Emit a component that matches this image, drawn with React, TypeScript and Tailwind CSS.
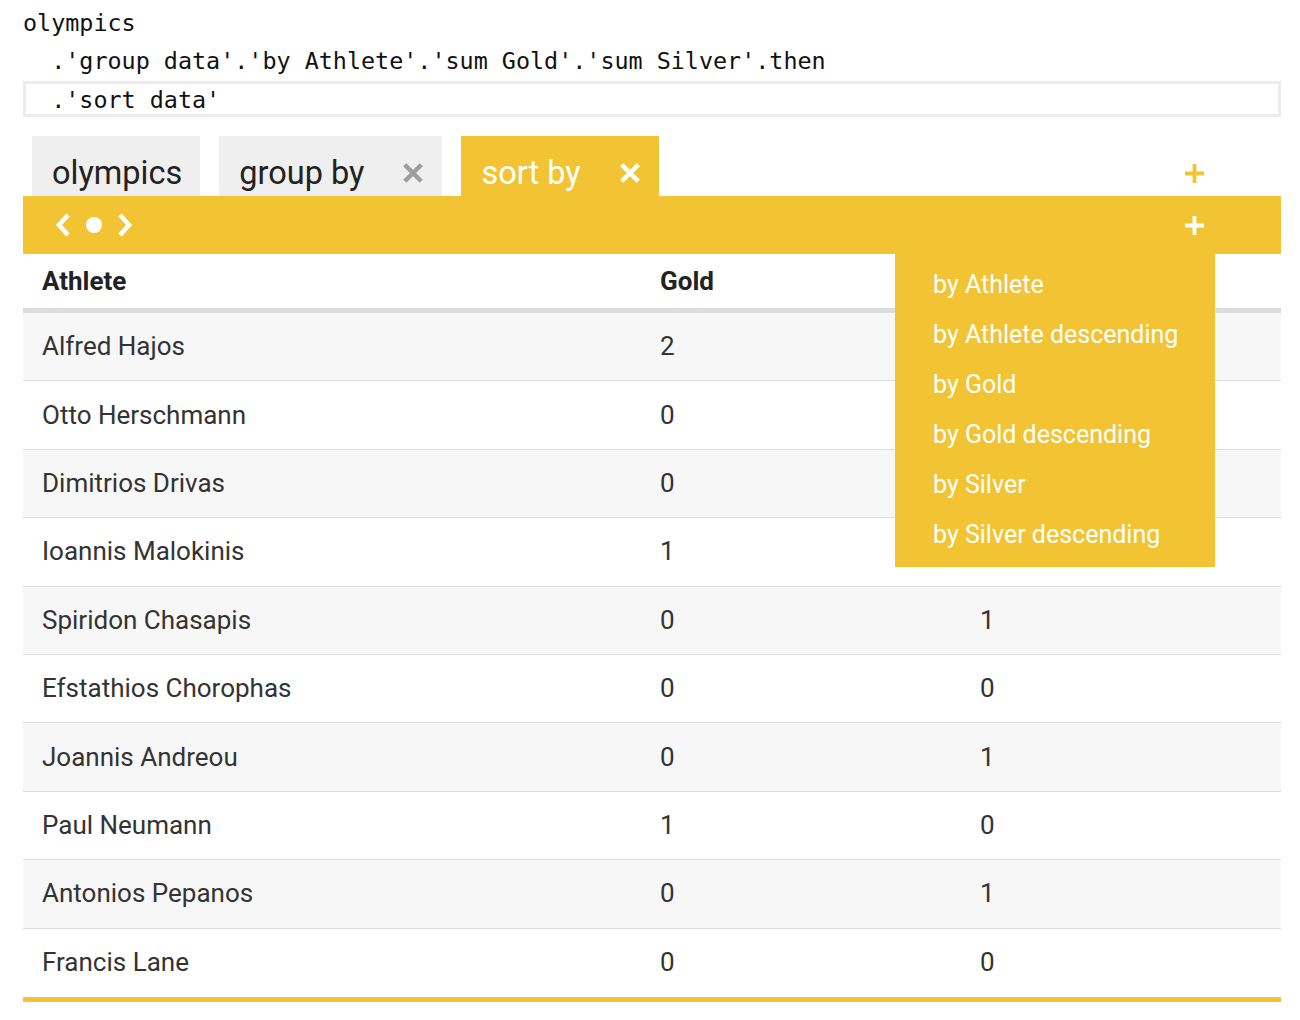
const rows = [
  { athlete: "Alfred Hajos", gold: 2, silver: 0 },
  { athlete: "Otto Herschmann", gold: 0, silver: 1 },
  { athlete: "Dimitrios Drivas", gold: 0, silver: 0 },
  { athlete: "Ioannis Malokinis", gold: 1, silver: 0 },
  { athlete: "Spiridon Chasapis", gold: 0, silver: 1 },
  { athlete: "Efstathios Chorophas", gold: 0, silver: 0 },
  { athlete: "Joannis Andreou", gold: 0, silver: 1 },
  { athlete: "Paul Neumann", gold: 1, silver: 0 },
  { athlete: "Antonios Pepanos", gold: 0, silver: 1 },
  { athlete: "Francis Lane", gold: 0, silver: 0 },
];

const sortOptions = [
  "by Athlete",
  "by Athlete descending",
  "by Gold",
  "by Gold descending",
  "by Silver",
  "by Silver descending",
];

const Cross = ({ className }: { className?: string }) => (
  <svg viewBox="0 0 24 24" className={className} fill="none" stroke="currentColor" strokeWidth={5}>
    <path d="M3 3 L21 21 M21 3 L3 21" />
  </svg>
);

const Plus = ({ className }: { className?: string }) => (
  <svg viewBox="0 0 22 22" className={className} fill="none" stroke="currentColor" strokeWidth={4}>
    <path d="M11 1 V21 M1 11 H21" />
  </svg>
);

function Tab({ label, active, closable }: { label: string; active?: boolean; closable?: boolean }) {
  return (
    <div
      className={
        active
          ? "flex items-center h-full bg-[#f2c433] text-white pl-[20px] pr-[18px] pt-[14px]"
          : "flex items-center h-full bg-[#efefef] text-[#222] pl-[20px] pr-[18px] pt-[14px]"
      }
    >
      <span className="text-[32.5px] leading-none">{label}</span>
      {closable && (
        <Cross className={active ? "w-[22px] h-[22px] ml-[38px] text-white" : "w-[22px] h-[22px] ml-[38px] text-[#9e9e9e]"} />
      )}
    </div>
  );
}

export default function App() {
  return (
    <div className="w-[1300px] min-h-[1020px] bg-white pl-[23px] pr-[19px] pt-[5px] font-['Roboto',sans-serif]">
      <div className="font-['DejaVu_Sans_Mono',monospace] text-[23.4px] text-[#111] whitespace-pre">
        <div className="h-[38px] flex items-center">olympics</div>
        <div className="h-[38px] flex items-center">  .'group data'.'by Athlete'.'sum Gold'.'sum Silver'.then</div>
        <div className="h-[36px] flex items-center border-[3px] border-[#ececec] pt-[3px]">
          <span className="-ml-[3px]">  .'sort data'</span>
        </div>
      </div>

      <div className="flex items-end h-[60px] mt-[19px] ml-[9px] gap-[19px]">
        <Tab label="olympics" />
        <Tab label="group by" closable />
        <Tab label="sort by" active closable />
        <div className="ml-auto mr-[76px] self-center pt-[14px]">
          <Plus className="w-[21px] h-[21px] text-[#f2c433]" />
        </div>
      </div>

      <div className="relative">
        <div className="flex items-center h-[58px] bg-[#f2c433] pl-[32px] pr-[76px]">
          <svg viewBox="0 0 80 24" className="w-[80px] h-[24px]" fill="none" stroke="white" strokeWidth={4.5}>
            <path d="M13 2 L4 12 L13 22" />
            <circle cx="39" cy="12" r="8" fill="white" stroke="none" />
            <path d="M65 2 L74 12 L65 22" />
          </svg>
          <Plus className="w-[21px] h-[21px] text-white ml-auto" />
        </div>

        <div className="text-[26px] text-[#333]">
          <div className="grid grid-cols-[618px_320px_320px] items-center h-[59px] border-b-[5px] border-[#dddddd] font-bold text-[#222]">
            <div className="pl-[19px]">Athlete</div>
            <div className="pl-[19px]">Gold</div>
            <div className="pl-[19px]">Silver</div>
          </div>
          {rows.map((r, i) => (
            <div
              key={r.athlete}
              className={
                "grid grid-cols-[618px_320px_320px] items-center " +
                (i % 2 === 0 ? "bg-[#f7f7f7] " : "bg-white ") +
                (i === rows.length - 1
                  ? "h-[73.4px] border-b-[5px] border-[#f2c433]"
                  : "h-[68.4px] border-b border-[#dddddd]")
              }
            >
              <div className="pl-[19px]">{r.athlete}</div>
              <div className="pl-[19px]">{r.gold}</div>
              <div className="pl-[19px]">{r.silver}</div>
            </div>
          ))}
        </div>

        <div className="absolute left-[872px] top-[58px] w-[320px] h-[313px] bg-[#f2c433] pt-[6px]">
          {sortOptions.map((o) => (
            <div key={o} className="h-[50px] flex items-center pl-[38px] text-white text-[25px]">
              {o}
            </div>
          ))}
        </div>
      </div>
    </div>
  );
}
